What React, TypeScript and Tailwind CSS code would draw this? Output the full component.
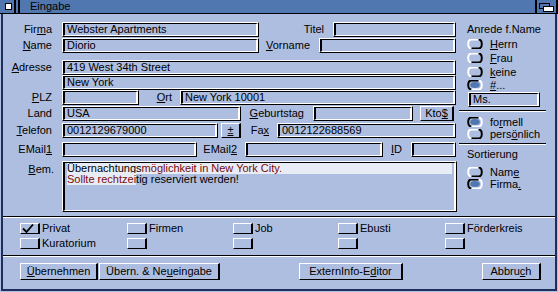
import React from "react";

type P = { className?: string; children?: React.ReactNode };

const U = ({ children }: P) => (
  <span className="underline underline-offset-1 decoration-1">{children}</span>
);

const Field = ({ className = "", children }: P) => (
  <div
    className={`h-[15px] shrink-0 border-t border-l border-b border-r border-t-white border-l-white border-b-black border-r-black ${className}`}
  >
    <div className="h-full border-t border-l-2 border-b border-r-2 border-t-black border-l-black border-b-white border-r-white pl-[2px] leading-[11px] whitespace-nowrap overflow-hidden">
      {children}
    </div>
  </div>
);

const Btn = ({ className = "", children }: P) => (
  <div
    className={`shrink-0 flex items-center justify-center border-t border-l border-b border-r-2 border-t-white border-l-white border-b-black border-r-black leading-[11px] whitespace-nowrap ${className}`}
  >
    {children}
  </div>
);

const Label = ({ className = "", children }: P) => (
  <div className={`shrink-0 text-right leading-[11px] whitespace-nowrap ${className}`}>{children}</div>
);

const Radio = ({ on, children, className = "" }: P & { on?: boolean }) => (
  <div className={`flex items-center h-[10px] pl-[8px] ${className}`}>
    <svg width="16" height="10" viewBox="0 0 16 10" className="shrink-0">
      {on && <ellipse cx="8" cy="5" rx="4.8" ry="3" fill="#5077b0" />}
      <path
        d="M12 0.5 H4.5 Q1.2 0.5 1.2 5 Q1.2 9.5 4.5 9.5"
        fill="none"
        stroke={on ? "#000" : "#fff"}
        strokeWidth="2"
      />
      <path
        d="M4.5 9.5 H11.5 Q14.8 9.5 14.8 5 Q14.8 0.5 11.5 0.5"
        fill="none"
        stroke={on ? "#fff" : "#000"}
        strokeWidth="2"
      />
    </svg>
    <span className="ml-[7px] leading-[11px] whitespace-nowrap">{children}</span>
  </div>
);

const Check = ({ on, children }: P & { on?: boolean }) => (
  <div className="flex items-center h-[11px]">
    <div className="w-[20px] h-[11px] shrink-0 border-t border-l border-b border-r-2 border-t-white border-l-white border-b-black border-r-black">
      {on && (
        <svg width="17" height="9" viewBox="0 0 17 9" className="block">
          <path d="M2 4.5 L5.5 8 L12 0.5" fill="none" stroke="#000" strokeWidth="1.8" />
        </svg>
      )}
    </div>
    {children && <span className="ml-[2px] leading-[11px] whitespace-nowrap">{children}</span>}
  </div>
);

const Sep = ({ className = "" }: P) => (
  <div className={`border-t border-b border-t-black border-b-white ${className}`} />
);

export default function App() {
  return (
    <div className="w-[558px] h-[292px] bg-[#aebee0] text-black text-[11px] leading-[11px] font-['Liberation_Sans',Arial,sans-serif] overflow-hidden">
      {/* Title bar */}
      <div className="h-[14px] bg-[#5077b0] border-b border-black flex">
        <div className="w-[14px] shrink-0 pl-[5px] pt-[3px]">
          <div className="w-[7px] h-[7px] border border-black bg-white" />
        </div>
        <div className="w-[2px] bg-black shrink-0" />
        <div className="w-[2px] shrink-0" />
        <div className="w-[2px] bg-black shrink-0" />
        <div className="flex-1 pl-[10px] leading-[13px] text-[11px]">Eingabe</div>
        <div className="w-[2px] bg-black shrink-0" />
        <div className="w-[19px] shrink-0 pl-[2px] pt-[3px]">
          <svg width="15" height="9" viewBox="0 0 15 9" className="block">
            <rect x="0.5" y="0.5" width="10" height="5" fill="#5077b0" stroke="#000" />
            <rect x="4.5" y="3.5" width="10" height="5" fill="#fff" stroke="#000" />
          </svg>
        </div>
        <div className="w-[2px] bg-black shrink-0" />
      </div>

      {/* Window body */}
      <div className="h-[277px] mx-[1px] border-l-2 border-r-2 border-b-2 border-[#1e2f5c] flex flex-col">
        <div className="flex">
          {/* Main form */}
          <div className="w-[456px] shrink-0 flex flex-col">
            <div className="flex items-center mt-[8px]">
              <Label className="w-[49px]">
                Fir<U>m</U>a
              </Label>
              <Field className="ml-[10px] w-[197px]">Webster Apartments</Field>
              <Label className="w-[65px]">Titel</Label>
              <Field className="ml-[9px] w-[123px]" />
            </div>
            <div className="flex items-center mt-[1px]">
              <Label className="w-[49px]">
                <U>N</U>ame
              </Label>
              <Field className="ml-[10px] w-[197px]">Diorio</Field>
              <Label className="w-[51px]">
                <U>V</U>orname
              </Label>
              <Field className="ml-[9px] w-[137px]" />
            </div>
            <div className="flex items-center mt-[7px]">
              <Label className="w-[49px]">
                <U>A</U>dresse
              </Label>
              <Field className="ml-[10px] w-[394px]">419 West 34th Street</Field>
            </div>
            <div className="flex items-center">
              <Label className="w-[49px]" />
              <Field className="ml-[10px] w-[394px]">New York</Field>
            </div>
            <div className="flex items-center">
              <Label className="w-[49px]">
                <U>P</U>LZ
              </Label>
              <Field className="ml-[10px] w-[77px]" />
              <Label className="w-[33px]">
                <U>O</U>rt
              </Label>
              <Field className="ml-[8px] w-[276px]">New York 10001</Field>
            </div>
            <div className="flex items-center mt-[1px]">
              <Label className="w-[49px]">Land</Label>
              <Field className="ml-[10px] w-[179px]">USA</Field>
              <Label className="w-[63px]">
                <U>G</U>eburtstag
              </Label>
              <Field className="ml-[9px] w-[100px]" />
              <Btn className="ml-[7px] w-[34px] h-[15px]">
                Kto<U>$</U>
              </Btn>
            </div>
            <div className="flex items-center mt-[2px]">
              <Label className="w-[49px]">
                <U>T</U>elefon
              </Label>
              <Field className="ml-[10px] w-[156px]">0012129679000</Field>
              <Btn className="ml-[3px] w-[20px] h-[15px]">
                <U>±</U>
              </Btn>
              <Label className="w-[28px]">
                Fa<U>x</U>
              </Label>
              <Field className="ml-[8px] w-[179px]">0012122688569</Field>
            </div>
            <div className="flex items-center mt-[4px]">
              <Label className="w-[49px]">
                EMail<U>1</U>
              </Label>
              <Field className="ml-[10px] w-[135px]" />
              <Label className="w-[40px]">
                EMail<U>2</U>
              </Label>
              <Field className="ml-[8px] w-[138px]" />
              <Label className="w-[19px]">
                <U>I</U>D
              </Label>
              <Field className="ml-[9px] w-[45px]" />
            </div>
            <div className="flex items-start mt-[4px]">
              <Label className="w-[51px] pt-[3px]">
                <U>B</U>em.
              </Label>
              <div className="ml-[8px] w-[395px] h-[51px] shrink-0 border-t border-l border-b border-r border-t-white border-l-white border-b-black border-r-black">
                <div className="h-full border-t border-l-2 border-b border-r-2 border-t-black border-l-black border-b-white border-r-white pl-[2px] pr-[2px] leading-[11px] whitespace-nowrap overflow-hidden">
                  <div className="bg-[#e8ecf5]">
                    <span>Übernachtungs</span>
                    <span className="text-[#7a0a0a]">möglichkeit in New York City.</span>
                  </div>
                  <div>
                    <span className="bg-[#e8ecf5] text-[#7a0a0a]">Sollte rechtzei</span>
                    <span>tig reserviert werden!</span>
                  </div>
                </div>
              </div>
            </div>
          </div>

          {/* Right panel */}
          <div className="flex-1 flex flex-col">
            <div className="mt-[10px] pl-[8px] whitespace-nowrap">Anrede f.Name</div>
            <Radio className="mt-[4px]">
              <U>H</U>errn
            </Radio>
            <Radio className="mt-[4px]">
              <U>F</U>rau
            </Radio>
            <Radio className="mt-[4px]">
              <U>k</U>eine
            </Radio>
            <Radio on className="mt-[3px]">
              <U>#</U>...
            </Radio>
            <Field className="mt-[2px] ml-[9px] w-[72px]">Ms.</Field>
            <Sep className="mt-[3px] w-[87px]" />
            <Radio on className="mt-[5px]">
              fo<U>r</U>mell
            </Radio>
            <Radio className="mt-[2px]">
              pers<U>ö</U>nlich
            </Radio>
            <Sep className="mt-[4px] w-[87px]" />
            <div className="mt-[4px] pl-[8px] whitespace-nowrap">Sortierung</div>
            <Radio className="mt-[7px]">
              Nam<U>e</U>
            </Radio>
            <Radio on className="mt-[2px]">
              Firma<U>.</U>
            </Radio>
          </div>
        </div>

        <Sep className="mt-[4px]" />

        <div className="mt-[5px] pl-[17px] grid grid-cols-[107px_106px_105px_107px_auto] gap-y-[4px]">
          <Check on>Privat</Check>
          <Check>Firmen</Check>
          <Check>Job</Check>
          <Check>Ebusti</Check>
          <Check>Förderkreis</Check>
          <Check>Kuratorium</Check>
          <Check />
          <Check />
          <Check />
          <Check />
        </div>

        <Sep className="mt-[6px]" />

        <div className="mt-[6px] pl-[17px] flex">
          <Btn className="w-[78px] h-[17px]">
            <U>Ü</U>bernehmen
          </Btn>
          <Btn className="ml-[1px] w-[121px] h-[17px]">
            Übern. &amp; Ne<U>u</U>eingabe
          </Btn>
          <Btn className="ml-[79px] w-[104px] h-[17px]">
            ExternInfo-E<U>d</U>itor
          </Btn>
          <Btn className="ml-[79px] w-[59px] h-[17px]">
            Abbru<U>c</U>h
          </Btn>
        </div>
      </div>
    </div>
  );
}
